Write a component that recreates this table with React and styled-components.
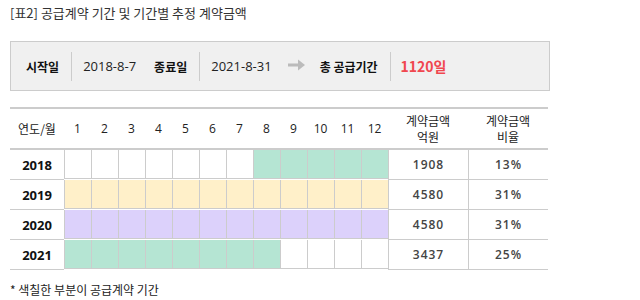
import styled, { createGlobalStyle } from 'styled-components'

const GlobalStyle = createGlobalStyle`
  html, body {
    margin: 0;
    padding: 0;
    background: #fff;
  }
  body {
    font-family: 'Noto Sans CJK KR', 'Noto Sans', sans-serif;
    color: #222;
  }
`

const Page = styled.div`
  width: 640px;
  height: 300px;
  padding: 4px 10px 0;
  box-sizing: border-box;
`

const Title = styled.h3`
  margin: 0;
  font-size: 13px;
  font-weight: 400;
  line-height: 18px;
  color: #333;
`

const InfoBox = styled.div`
  margin-top: 19px;
  width: 540px;
  height: 50px;
  box-sizing: border-box;
  background: #f0f0f0;
  border: 1px solid #ccc;
  display: flex;
  align-items: center;
  padding-left: 15px;
`

const Label = styled.span`
  font-size: 12px;
  font-weight: 700;
  color: #111;
  padding-right: 12px;
  border-right: 1px solid #ccc;
  line-height: 29px;
`

const Value = styled.span`
  font-family: 'Open Sans', 'Noto Sans', sans-serif;
  font-size: 13px;
  color: #222;
  padding: 0 ${(p) => p.$gap || 18}px 0 11px;
`

const Total = styled.span`
  font-size: 14px;
  font-weight: 700;
  color: #f0474f;
  padding-left: 10px;
`

const Arrow = styled.svg`
  width: 18px;
  height: 12px;
  margin: 0 14px 2px 10px;
`

const Grid = styled.div`
  margin-top: 16px;
  width: 538px;
  display: grid;
  grid-template-columns: 54px repeat(12, 27px) 80px 80px;
  border-top: 2px solid #ccc;
`

const Head = styled.div`
  height: 39px;
  display: flex;
  flex-direction: column;
  align-items: center;
  justify-content: center;
  border-bottom: 2px solid #ccc;
  font-size: 12px;
  line-height: 16px;
  color: #222;
  text-align: center;
`

const MonthHead = styled(Head)`
  font-family: 'Open Sans', 'Noto Sans', sans-serif;
`

const Year = styled.div`
  height: 29px;
  display: flex;
  align-items: center;
  justify-content: center;
  border-bottom: 1px solid #ccc;
  font-family: 'Open Sans', 'Noto Sans', sans-serif;
  font-size: 13px;
  font-weight: 700;
  color: #111;
`

const Cell = styled.div`
  height: 29px;
  box-sizing: border-box;
  border-left: 1px solid #ccc;
  border-bottom: 1px solid #ccc;
  background: ${(p) => p.$fill || '#fff'};
`

const Num = styled(Year)`
  border-left: 1px solid #ccc;
  font-size: 12px;
  font-weight: 600;
  color: #444;
  letter-spacing: 1px;
`

const Note = styled.p`
  margin: 12px 0 0;
  font-size: 12px;
  line-height: 16px;
  color: #222;
`

const GREEN = '#b5e5d3'
const YELLOW = '#fff0c9'
const PURPLE = '#dcd1fb'

const rows = [
  { year: 2018, from: 8, to: 12, fill: GREEN, amount: 1908, ratio: '13%' },
  { year: 2019, from: 1, to: 12, fill: YELLOW, amount: 4580, ratio: '31%' },
  { year: 2020, from: 1, to: 12, fill: PURPLE, amount: 4580, ratio: '31%' },
  { year: 2021, from: 1, to: 8, fill: GREEN, amount: 3437, ratio: '25%' },
]

const months = Array.from({ length: 12 }, (_, i) => i + 1)

export default function App() {
  return (
    <Page>
      <GlobalStyle />
      <Title>[표2] 공급계약 기간 및 기간별 추정 계약금액</Title>

      <InfoBox>
        <Label>시작일</Label>
        <Value>2018-8-7</Value>
        <Label>종료일</Label>
        <Value $gap={6}>2021-8-31</Value>
        <Arrow viewBox="0 0 18 12">
          <path d="M0 6h13" stroke="#bbb" strokeWidth="3" />
          <path d="M10 0.5l7 5.5-7 5.5z" fill="#bbb" />
        </Arrow>
        <Label>총 공급기간</Label>
        <Total>1120일</Total>
      </InfoBox>

      <Grid>
        <Head>연도/월</Head>
        {months.map((m) => (
          <MonthHead key={m}>{m}</MonthHead>
        ))}
        <Head>
          <span>계약금액</span>
          <span>억원</span>
        </Head>
        <Head>
          <span>계약금액</span>
          <span>비율</span>
        </Head>

        {rows.map((r) => (
          <>
            <Year key={r.year}>{r.year}</Year>
            {months.map((m) => (
              <Cell
                key={`${r.year}-${m}`}
                $fill={m >= r.from && m <= r.to ? r.fill : null}
              />
            ))}
            <Num>{r.amount}</Num>
            <Num>{r.ratio}</Num>
          </>
        ))}
      </Grid>

      <Note>* 색칠한 부분이 공급계약 기간</Note>
    </Page>
  )
}
